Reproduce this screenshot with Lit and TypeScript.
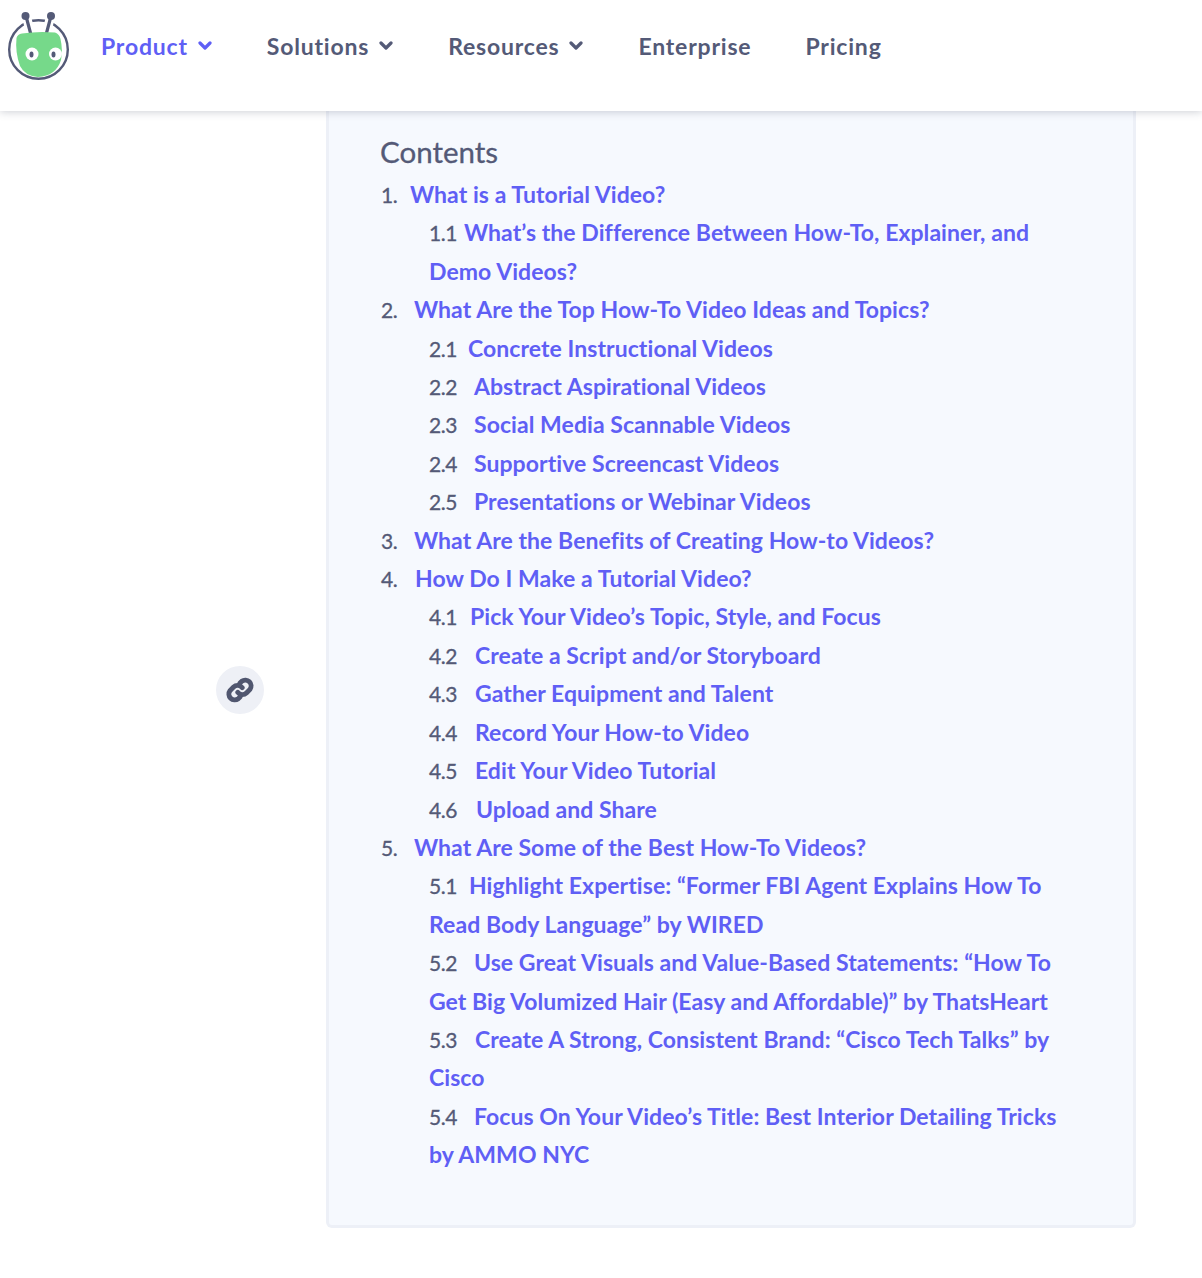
import { LitElement, html, css, svg } from "lit";
import { customElement } from "lit/decorators.js";

type Row = [number, string, number, string];
/* level, number, width from the row's start to its title, title */
const rows: Row[] = [
  [1, "1.", 29, "What is a Tutorial Video?"],
  [2, "1.1", 35, "What’s the Difference Between How-To, Explainer, and Demo Videos?"],
  [1, "2.", 33, "What Are the Top How-To Video Ideas and Topics?"],
  [2, "2.1", 39, "Concrete Instructional Videos"],
  [2, "2.2", 45, "Abstract Aspirational Videos"],
  [2, "2.3", 45, "Social Media Scannable Videos"],
  [2, "2.4", 45, "Supportive Screencast Videos"],
  [2, "2.5", 45, "Presentations or Webinar Videos"],
  [1, "3.", 33, "What Are the Benefits of Creating How-to Videos?"],
  [1, "4.", 34, "How Do I Make a Tutorial Video?"],
  [2, "4.1", 41, "Pick Your Video’s Topic, Style, and Focus"],
  [2, "4.2", 46, "Create a Script and/or Storyboard"],
  [2, "4.3", 46, "Gather Equipment and Talent"],
  [2, "4.4", 46, "Record Your How-to Video"],
  [2, "4.5", 46, "Edit Your Video Tutorial"],
  [2, "4.6", 47, "Upload and Share"],
  [1, "5.", 33, "What Are Some of the Best How-To Videos?"],
  [2, "5.1", 40, "Highlight Expertise: “Former FBI Agent Explains How To Read Body Language” by WIRED"],
  [2, "5.2", 45, "Use Great Visuals and Value-Based Statements: “How To Get Big Volumized Hair (Easy and Affordable)” by ThatsHeart"],
  [2, "5.3", 46, "Create A Strong, Consistent Brand: “Cisco Tech Talks” by Cisco"],
  [2, "5.4", 45, "Focus On Your Video’s Title: Best Interior Detailing Tricks by AMMO NYC"],
];

const chevron = svg`<svg class="chev" viewBox="0 0 14 10" width="14" height="10"><path d="M2 2 7 7 12 2" fill="none" stroke="currentColor" stroke-width="3.200" stroke-linecap="round" stroke-linejoin="round"/></svg>`;

@customElement("app-root")
export class AppRoot extends LitElement {
  static styles = css`
    :host { display: block; height: 1278px; background: #fff; overflow: hidden; font-family: "Lato", "Liberation Sans", sans-serif; color: #545a77; font-variant-ligatures: none; }
    .head { position: relative; z-index: 2; height: 111px; background: #fff; box-shadow: 0 1px 8px rgba(60,66,90,.25); display: flex; align-items: flex-start; box-sizing: border-box; }
    .logo { width: 80px; height: 90px; flex: none; }
    .nav { display: flex; margin: 32px 0 0 21px; font-size: 23px; font-weight: 700; letter-spacing: .8px; line-height: 28px; }
    .nav a { display: flex; align-items: center; gap: 10px; }
    .nav a.on { color: #5f5ff5; }
    .n1 { margin-right: 55px; }
    .n2 { margin-right: 55px; }
    .n3 { margin-right: 55px; }
    .n4 { margin-right: 54px; }
    .body { display: flex; align-items: flex-start; }
    .side { width: 326px; flex: none; display: flex; justify-content: flex-end; padding-top: 555px; padding-right: 62px; box-sizing: border-box; }
    .share { width: 48px; height: 48px; border-radius: 50%; background: #eef0f6; display: flex; align-items: center; justify-content: center; color: #50566f; }
    .panel { width: 810px; height: 1117px; box-sizing: border-box; background: #f6f9fe; border: 3px solid #edf0f7; border-top: 0; border-radius: 0 0 6px 6px; padding: 22px 72px 0 52px; }
    h2 { margin: 0 0 4px -1px; font-size: 29.500px; font-weight: 400; line-height: 38px; color: #545a77; -webkit-text-stroke: .3px #545a77; }
    .row { font-size: 23px; line-height: 38.400px; font-weight: 700; letter-spacing: .06px; color: #5f5ff5; }
    .row.l2 { padding-left: 48px; }
    .num { display: inline-block; line-height: 1; color: #545a77; font-weight: 400; font-size: 21px; letter-spacing: -.5px; -webkit-text-stroke: .3px #545a77; }
  `;
  render() {
    return html`
      <header class="head">
        <svg class="logo" viewBox="0 0 80 90" role="img">
          <circle cx="38.500" cy="49.500" r="29.300" fill="#fff" stroke="#545a77" stroke-width="2.400"/>
          <path d="M27 19 31 34M50 19 46 34" stroke="#fff" stroke-width="9"/>
          <path d="M26.500 18 30.500 33M50.500 18 46.500 33" stroke="#545a77" stroke-width="3.200" stroke-linecap="round"/>
          <circle cx="25.500" cy="16" r="4" fill="#545a77"/><circle cx="51" cy="16" r="4" fill="#545a77"/>
          <path d="M16.500 38Q17.500 34 22 33.500 38 31 55 32.500 59.500 34 60.500 39 63 50 61 60 56 76 38 77 25 76 20 66 15 52 16.500 38Z" fill="#76d98a"/>
          <circle cx="32" cy="54" r="6.500" fill="#fff"/><circle cx="55.500" cy="54" r="6.500" fill="#fff"/>
          <ellipse cx="31.500" cy="54.500" rx="2" ry="3" fill="#545a77"/><ellipse cx="53.500" cy="54.500" rx="2" ry="3" fill="#545a77"/>
        </svg>
        <nav class="nav">
          <a class="on n1">Product ${chevron}</a>
          <a class="n2">Solutions ${chevron}</a>
          <a class="n3">Resources ${chevron}</a>
          <a class="n4">Enterprise</a>
          <a>Pricing</a>
        </nav>
      </header>
      <div class="body">
        <aside class="side">
          <div class="share">
            <svg viewBox="0 0 24 24" width="28" height="28" fill="none" stroke="currentColor" stroke-width="4.200" stroke-linecap="round">
              <path d="M10 14a5 5 0 0 0 7.500.5l3-3a5 5 0 0 0-7-7l-1.700 1.700"/>
              <path d="M14 10a5 5 0 0 0-7.500-.5l-3 3a5 5 0 0 0 7 7l1.700-1.700"/>
            </svg>
          </div>
        </aside>
        <section class="panel">
          <h2>Contents</h2>
          ${rows.map(([l, n, w, t]) => html`<div class="row l${l}"><span class="num" style="width:${w}px">${n}</span>${t}</div>`)}
        </section>
      </div>
    `;
  }
}
